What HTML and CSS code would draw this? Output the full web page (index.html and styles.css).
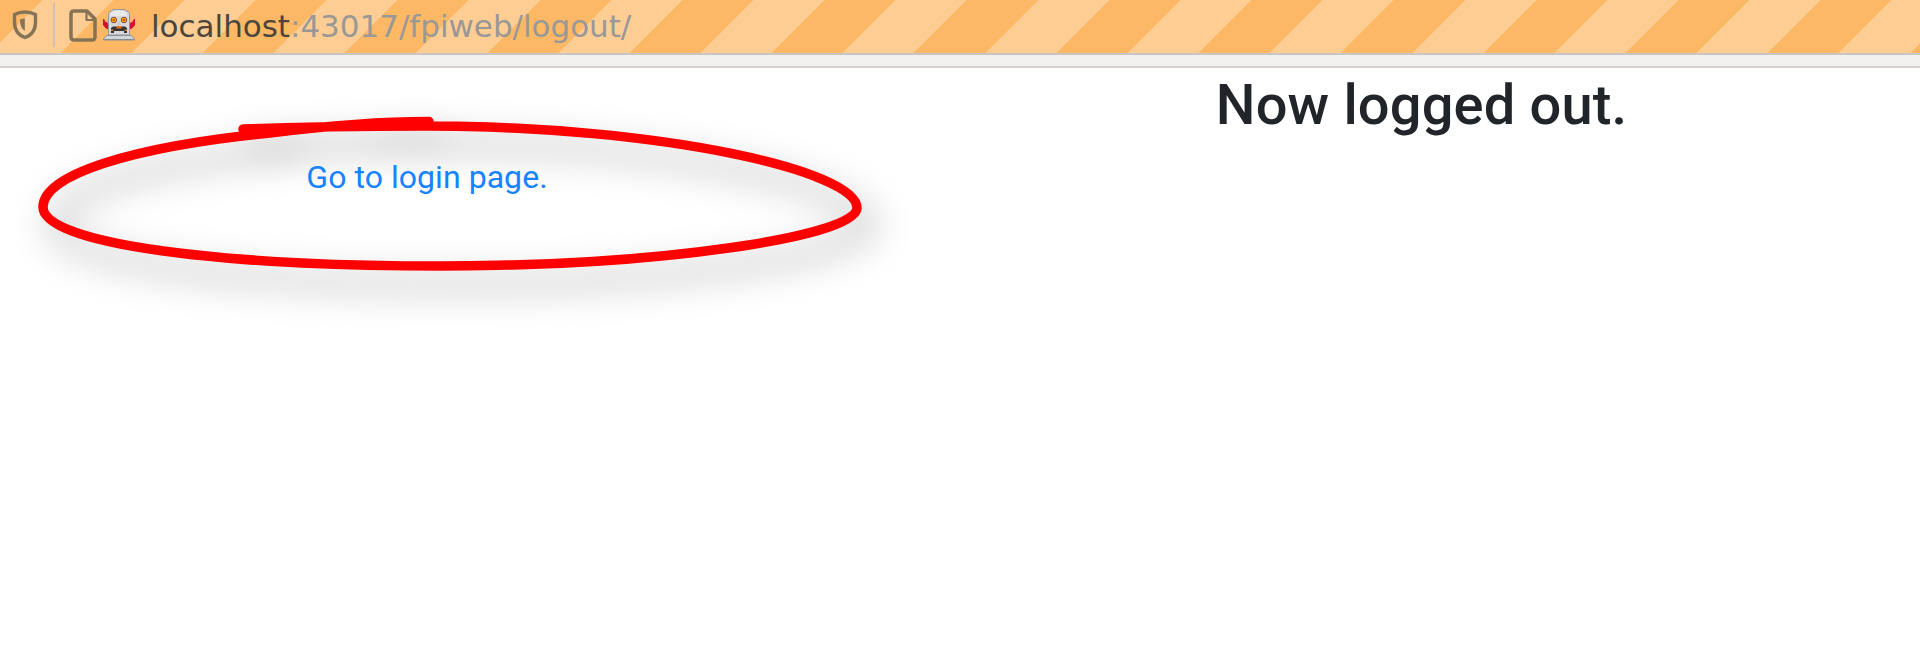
FILE: index.html
```html
<!DOCTYPE html>
<html lang="en">
<head>
<meta charset="utf-8">
<title>Logged out</title>
<link rel="stylesheet" href="styles.css">
</head>
<body>
<header class="address-bar">
  <svg class="shield" width="26" height="30" viewBox="0 0 26 30" fill="none" stroke="#857356" stroke-width="3.400" stroke-linejoin="round">
    <path d="M13 2C9 2 5.500 3 2.500 4.500V12C2.500 19.500 6 25 13 27.500C20 25 23.500 19.500 23.500 12V4.500C20.500 3 17 2 13 2Z"/>
    <path d="M12.800 8.200V21C9.500 18.500 8.200 16 8 9.500Z" fill="#857356" stroke="none"/>
  </svg>
  <span class="divider"></span>
  <svg class="page-icon" width="28" height="33" viewBox="0 0 28 33" fill="none" stroke="#857356" stroke-width="3.500" stroke-linejoin="round">
    <path d="M5 2H18L26 10V28Q26 31 23 31H5Q2 31 2 28V5Q2 2 5 2Z"/>
    <path d="M17.500 2V11H26" stroke-width="2.200"/>
  </svg>
  <svg class="robot" width="34" height="34" viewBox="0 0 34 34">
    <path d="M1.500 11L3 14L7 16V21L4 20L1.500 17ZM32.500 11L31 14L27 16V21L30 20L32.500 17Z" fill="#d50f32" stroke="#d50f32" stroke-width="1"/>
    <path d="M6.500 27V6Q6.500 3 10 3L11 1.500H23L24 3Q27.500 3 27.500 6V27Z" fill="#d8d8da" stroke="#97979c" stroke-width="1"/>
    <path d="M9 4Q17 1 25 4V8H9Z" fill="#e9e9ea"/>
    <circle cx="11.800" cy="12" r="2.800" fill="#f5a300" stroke="#87504a"/>
    <circle cx="22" cy="12" r="2.800" fill="#f5a300" stroke="#87504a"/>
    <circle cx="11.800" cy="12" r="1.100" fill="#bd4a16"/>
    <circle cx="22" cy="12" r="1.100" fill="#bd4a16"/>
    <path d="M17 13L19 17H15Z" fill="#c4c4c8"/>
    <path d="M9 25V20L11 18.500H23L25 20V25H22V23H12V25Z" fill="#343437"/>
    <path d="M14.500 18H19.500V20.500H14.500Z" fill="#ed6c18"/>
    <path d="M9 21.500H11.500V23H9ZM22.500 21.500H25V23H22.500Z" fill="#d7781c"/>
    <path d="M4.500 27.500H29.500L32.500 31V32H1.500V31Z" fill="#d2d5d8" stroke="#8f9297"/>
    <path d="M2 31.500H32" stroke="#888c91"/>
  </svg>
  <div class="url"><span class="host">localhost</span>:43017/fpiweb/logout/</div>
</header>
<div class="toolbar-edge"></div>
<main class="content">
  <nav class="side"><a class="login-link">Go to login page.</a></nav>
  <section class="message"><h1 class="title">Now logged out.</h1></section>
  <svg class="annotation" width="960" height="360" viewBox="0 0 960 360" fill="none">
    <path class="scribble" d="M243 129C300 127 390 126 425 126C663 126 857 171 857 208C857 236 663 266 440 266C227 266 43 245 43 207C43 175 130 147 270 133C333 125 380 121.500 429 121.500"/>
  </svg>
</main>
</body>
</html>
```
FILE: styles.css
```css
body {
  margin: 0;
  background: #fff;
  font-family: Roboto, "Liberation Sans", sans-serif;
  overflow: hidden;
}

.address-bar {
  display: flex;
  align-items: flex-start;
  height: 53px;
  background: repeating-linear-gradient(135deg, #fdb866 0 29.73px, #fdcd93 29.73px 80.05px, #fdb866 80.05px 100.62px);
}

.shield { margin: 10px 0 0 12px; }

.divider {
  width: 2px;
  height: 44px;
  margin: 3px 0 0 15px;
  background: #d1c2b4;
}

.page-icon { margin: 9px 0 0 14px; }

.robot { margin: 8px 0 0 5px; }

.url {
  margin: 8px 0 0 15px;
  font: 31px/36px "DejaVu Sans", sans-serif;
  letter-spacing: -0.02px;
  color: #999897;
  white-space: nowrap;
}

.host { color: #4b453c; }

.toolbar-edge {
  box-sizing: border-box;
  height: 15px;
  background: #f1f0ee;
  border-top: 2px solid #cac6c3;
  border-bottom: 2px solid #d9cdcd;
}

.content {
  display: grid;
  grid-template-columns: 854px 997px;
  justify-content: space-between;
  height: 583px;
}

.side {
  padding-top: 90px;
  text-align: center;
}

.login-link {
  position: relative;
  z-index: 1;
  font-size: 32px;
  line-height: 38px;
  letter-spacing: 0.05px;
  color: #1683ff;
}

.message { text-align: center; }

.title {
  margin: 3px 0 0;
  font-size: 56px;
  line-height: 68px;
  letter-spacing: 0.15px;
  font-weight: 500;
  color: #212529;
}

/* Hand-drawn highlight laid over the link */
.annotation {
  position: absolute;
  top: 0;
  left: 0;
  pointer-events: none;
}

.scribble {
  stroke: #f00;
  stroke-width: 9.5px;
  stroke-linejoin: round;
  stroke-linecap: round;
  filter: drop-shadow(12px 18px 18px rgba(0, 0, 0, 0.36));
}
```
